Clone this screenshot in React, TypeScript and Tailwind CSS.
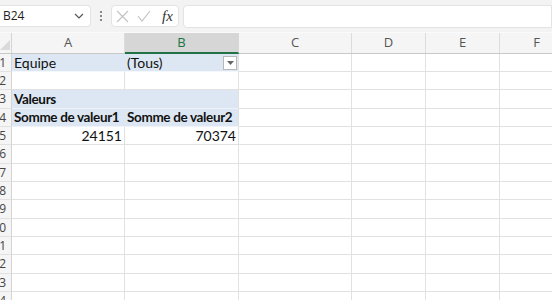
const COLS = [
  { id: "A", w: 113 },
  { id: "B", w: 114 },
  { id: "C", w: 113 },
  { id: "D", w: 74 },
  { id: "E", w: 74 },
  { id: "F", w: 74 },
];

const ROW_H = [18, 18, 19, 18, 18, 19, 18, 18, 19, 18, 18, 19, 18, 18];

const FONT = { fontFamily: "Lato, 'Liberation Sans', sans-serif" };

function Cell({ w, h, children, className = "" }: { w: number; h: number; children?: React.ReactNode; className?: string }) {
  return (
    <div className={`shrink-0 flex items-center border-r border-b border-[#e1e1e1] px-[2px] overflow-hidden whitespace-nowrap ${className}`} style={{ width: w, height: h }}>
      {children}
    </div>
  );
}

function renderRow(r: number, h: number) {
  const a = COLS[0].w;
  const b = COLS[1].w;
  if (r === 1)
    return (
      <>
        <Cell w={a} h={h} className="bg-[#dde7f3] border-b-[#f4f7fb] border-r-[#dde7f3]">Equipe</Cell>
        <Cell w={b} h={h} className="bg-[#dde7f3] border-b-[#f4f7fb] justify-between">
          <span>(Tous)</span>
          <span className="w-[14px] h-[14px] bg-white border border-[#b8b8b8] flex items-center justify-center mr-[-1px]">
            <svg width="7" height="4" viewBox="0 0 7 4"><path d="M0 0h7L3.5 4z" fill="#666" /></svg>
          </span>
        </Cell>
      </>
    );
  if (r === 3 || r === 4) {
    const bold = "bg-[#dde7f3] font-bold text-[13.5px] tracking-[-0.35px] border-b-[#eef3f9]";
    return (
      <>
        <Cell w={a} h={h} className={`${bold} border-r-[#dde7f3]`}>{r === 3 ? "Valeurs" : "Somme de valeur1"}</Cell>
        <Cell w={b} h={h} className={bold}>{r === 4 ? "Somme de valeur2" : ""}</Cell>
      </>
    );
  }
  if (r === 5)
    return (
      <>
        <Cell w={a} h={h} className="justify-end">24151</Cell>
        <Cell w={b} h={h} className="justify-end">70374</Cell>
      </>
    );
  return (
    <>
      <Cell w={a} h={h} />
      <Cell w={b} h={h} />
    </>
  );
}

export default function App() {
  return (
    <div className="w-[552px] h-[300px] overflow-hidden bg-white text-[#111]" style={FONT}>
      {/* formula bar */}
      <div className="h-[33px] bg-[#f3f3f3] flex items-center border-b border-[#fafafa]" style={{ fontFamily: "'Open Sans', sans-serif" }}>
        <div className="ml-[-6px] w-[97px] h-[22px] bg-white rounded-[4px] border border-[#e3e3e3] flex items-center justify-between pl-[8px] pr-[6px]">
          <span className="text-[12px] text-[#222]">B24</span>
          <svg width="10" height="6" viewBox="0 0 10 6"><path d="M1 1l4 4 4-4" stroke="#555" strokeWidth="1.2" fill="none" /></svg>
        </div>
        <div className="w-[20px] flex flex-col items-center gap-[2px]">
          <span className="w-[2px] h-[2px] bg-[#888]" />
          <span className="w-[2px] h-[2px] bg-[#888]" />
          <span className="w-[2px] h-[2px] bg-[#888]" />
        </div>
        <div className="w-[68px] h-[22px] bg-white rounded-[4px] border border-[#e3e3e3] flex items-center gap-[8px] pl-[4px]">
          <svg width="13" height="13" viewBox="0 0 13 13"><path d="M1 1l11 11M12 1L1 12" stroke="#c2c2c2" strokeWidth="1.1" /></svg>
          <svg width="14" height="12" viewBox="0 0 14 12"><path d="M1 6l4 5L13 1" stroke="#c2c2c2" strokeWidth="1.1" fill="none" /></svg>
          <span className="text-[15px] italic text-[#333] ml-[3px]" style={{ fontFamily: "'Liberation Serif', serif" }}>fx</span>
        </div>
        <div className="ml-[4px] flex-1 h-[23px] bg-white rounded-l-[4px] border border-[#e3e3e3]" />
      </div>

      {/* column headers */}
      <div className="flex h-[21px] bg-[#f5f5f5] border-b border-[#c8c8c8] text-[13px] text-[#555]" style={{ fontFamily: "'Open Sans', sans-serif" }}>
        <div className="w-[12px] shrink-0 relative border-r border-[#d4d4d4]">
          <svg className="absolute left-0 bottom-[3px]" width="10" height="10" viewBox="0 0 10 10"><path d="M10 0v10H0z" fill="#dadada" /></svg>
        </div>
        {COLS.map((col) =>
          col.id === "B" ? (
            <div key={col.id} className="shrink-0 flex items-center justify-center bg-[#d6d6d6] border-b-2 border-[#217346] text-[#217346] mb-[-1px] border-r border-r-[#d6d6d6]" style={{ width: col.w }}>
              {col.id}
            </div>
          ) : (
            <div key={col.id} className="shrink-0 flex items-center justify-center border-r border-[#dcdcdc]" style={{ width: col.w }}>
              {col.id}
            </div>
          )
        )}
      </div>

      {/* grid */}
      {ROW_H.map((h, i) => {
        const r = i + 1;
        return (
          <div key={r} className="flex text-[14px]">
            <div className="w-[12px] shrink-0 flex items-center justify-end pr-[5px] overflow-hidden bg-[#f5f5f5] border-r border-b border-[#d4d4d4] border-b-[#e1e1e1] text-[12px] text-[#444]" style={{ height: h, fontFamily: "'Open Sans', sans-serif" }}>
              <span className="shrink-0">{r}</span>
            </div>
            {renderRow(r, h)}
            {COLS.slice(2).map((col) => (
              <Cell key={col.id} w={col.w} h={h} />
            ))}
          </div>
        );
      })}
    </div>
  );
}
